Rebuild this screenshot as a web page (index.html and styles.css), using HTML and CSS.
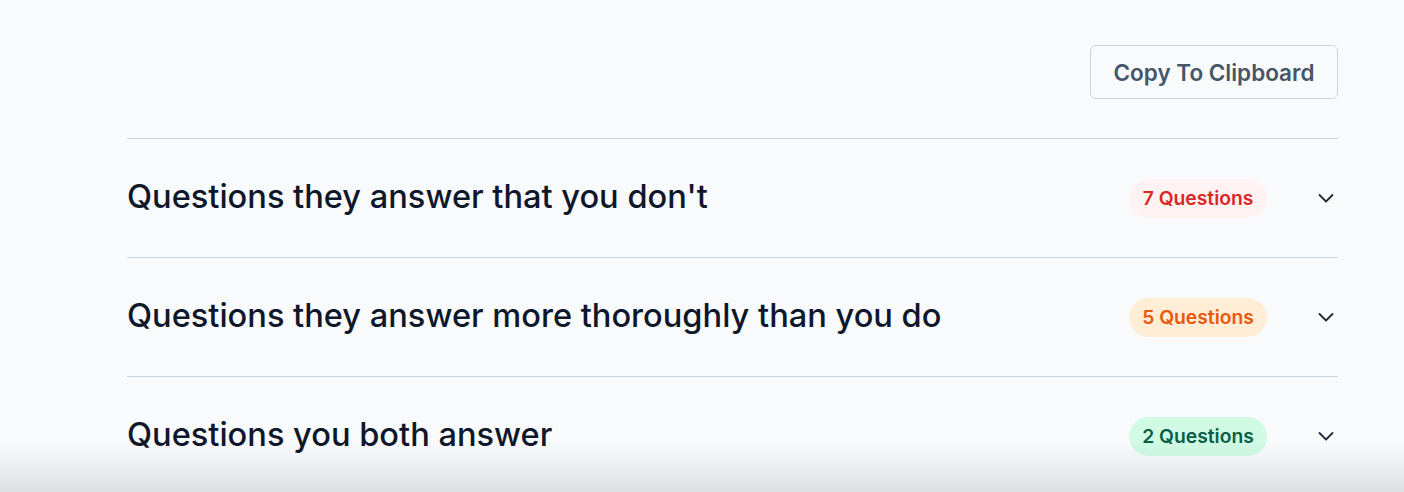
FILE: index.html
```html
<!DOCTYPE html>
<html lang="en">
<head>
  <meta charset="UTF-8" />
  <meta name="viewport" content="width=device-width, initial-scale=1.0"/>
  <title>Question Comparison</title>
  <link rel="stylesheet" href="styles.css">
</head>
<body>
  <div class="container">
    <div class="toolbar">
      <button class="copy-btn">Copy To Clipboard</button>
    </div>

    <div class="section">
      <h2>Questions they answer that you don't</h2>
      <span class="badge badge-red">7 Questions</span>
      <span class="chevron">
        <svg width="24" height="24" viewBox="0 0 24 24" fill="none" stroke="currentColor" stroke-width="1.8" stroke-linecap="round" stroke-linejoin="round"><path d="M5.5 9l6.5 6.5 6.5-6.5"/></svg>
      </span>
    </div>

    <div class="section">
      <h2>Questions they answer more thoroughly than you do</h2>
      <span class="badge badge-orange">5 Questions</span>
      <span class="chevron">
        <svg width="24" height="24" viewBox="0 0 24 24" fill="none" stroke="currentColor" stroke-width="1.8" stroke-linecap="round" stroke-linejoin="round"><path d="M5.5 9l6.5 6.5 6.5-6.5"/></svg>
      </span>
    </div>

    <div class="section">
      <h2>Questions you both answer</h2>
      <span class="badge badge-green">2 Questions</span>
      <span class="chevron">
        <svg width="24" height="24" viewBox="0 0 24 24" fill="none" stroke="currentColor" stroke-width="1.8" stroke-linecap="round" stroke-linejoin="round"><path d="M5.5 9l6.5 6.5 6.5-6.5"/></svg>
      </span>
    </div>
  </div>

  <div class="fade"></div>
</body>
</html>
```

FILE: styles.css
```css
:root {
  --bg: #f8fafc;
  --text: #0f172a;
  --border: #cbd5e1;
  --muted: #475569;
}

body {
  margin: 0;
  background-color: var(--bg);
  color: var(--text);
  font-family: Inter, "Noto Sans", sans-serif;
  overflow: hidden;
}

.container {
  width: 1211px;
  margin-left: 127px;
  padding-top: 45px;
}

.toolbar {
  display: flex;
  justify-content: flex-end;
  padding-bottom: 39px;
  border-bottom: 1px solid var(--border);
}

.copy-btn {
  height: 54px;
  width: 248px;
  border: 1px solid var(--border);
  border-radius: 6px;
  background-color: var(--bg);
  color: var(--muted);
  font-family: inherit;
  font-size: 22.5px;
  font-weight: 600;
  cursor: pointer;
}

.section {
  display: flex;
  align-items: center;
  height: 118px;
  border-bottom: 1px solid var(--border);
}

.section h2 {
  flex: 1;
  margin: 0 0 5px;
  font-size: 32.6px;
  font-weight: 500;
}

.badge {
  display: inline-flex;
  align-items: center;
  justify-content: center;
  width: 138px;
  height: 39px;
  border-radius: 20px;
  font-size: 19.3px;
  font-weight: 600;
  margin-right: 47px;
}

.badge-red {
  background-color: #fef2f2;
  color: #dc2626;
}

.badge-orange {
  background-color: #ffedd5;
  color: #ea580c;
}

.badge-green {
  background-color: #d1fae5;
  color: #065f46;
}

.chevron {
  display: flex;
  color: #1f2937;
}

.fade {
  position: fixed;
  left: 0;
  right: 0;
  bottom: 0;
  height: 50px;
  background: linear-gradient(rgba(0, 0, 0, 0), rgba(0, 0, 0, 0.1));
  pointer-events: none;
}
```
